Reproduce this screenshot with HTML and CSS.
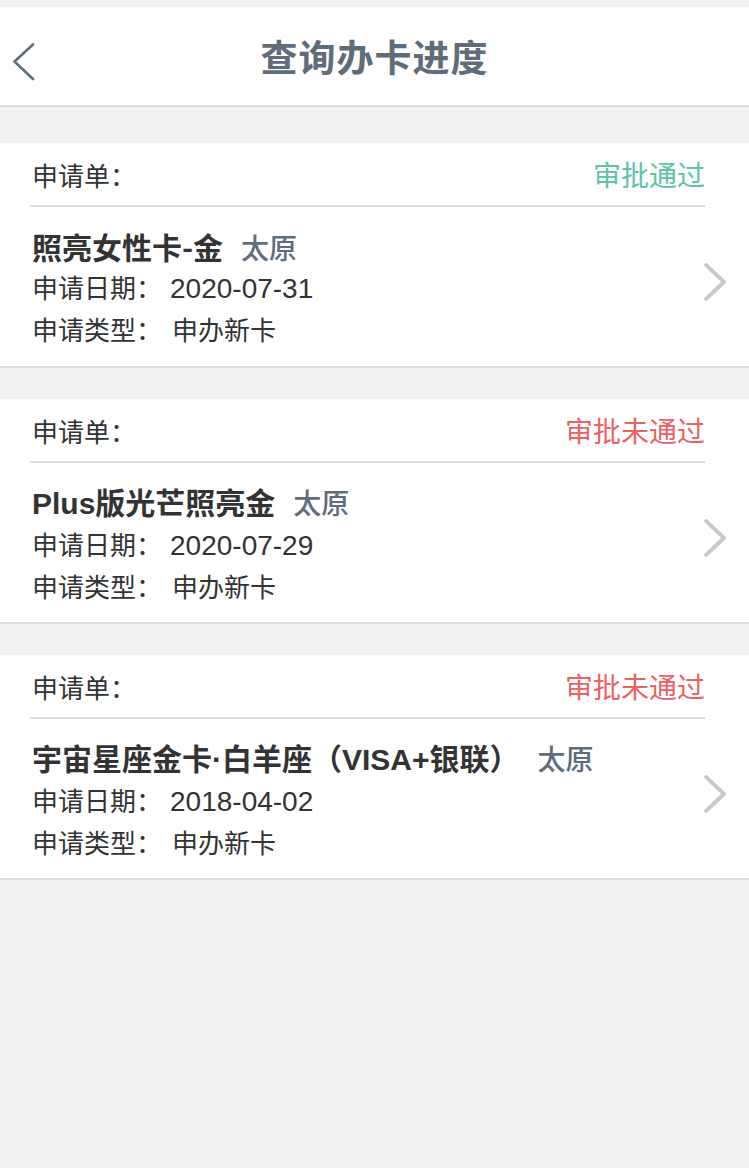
FILE: index.html
```html
<!DOCTYPE html>
<html>
<head>
  <meta charset="utf-8">
  <title>查询办卡进度</title>
  <link rel="stylesheet" href="styles.css">
</head>
<body>
  <div class="topbar">
    <a class="back" href="#">
      <svg width="24" height="40" viewBox="0 0 24 40"><polyline points="21,2.5 2.5,19.5 21,37" fill="none" stroke="#616e7b" stroke-width="2.6" stroke-linecap="round" stroke-linejoin="round"/></svg>
    </a>
    <h1>查询办卡进度</h1>
  </div>

  <div class="list">
    <div class="card">
      <div class="card-head">
        <span class="label">申请单：</span>
        <span class="status pass">审批通过</span>
      </div>
      <div class="card-body">
        <div class="info">
          <div class="title">照亮女性卡-金<span class="city">太原</span></div>
          <div class="line">申请日期：<span class="val num">2020-07-31</span></div>
          <div class="line">申请类型：<span class="val">申办新卡</span></div>
        </div>
        <svg class="arrow" width="26" height="40" viewBox="0 0 26 40"><polyline points="4,3 22,20 4,37" fill="none" stroke="#c8c8cd" stroke-width="3.8" stroke-linecap="round" stroke-linejoin="round"/></svg>
      </div>
    </div>

    <div class="card">
      <div class="card-head">
        <span class="label">申请单：</span>
        <span class="status fail">审批未通过</span>
      </div>
      <div class="card-body">
        <div class="info">
          <div class="title"><span class="num">Plus</span>版光芒照亮金<span class="city">太原</span></div>
          <div class="line">申请日期：<span class="val num">2020-07-29</span></div>
          <div class="line">申请类型：<span class="val">申办新卡</span></div>
        </div>
        <svg class="arrow" width="26" height="40" viewBox="0 0 26 40"><polyline points="4,3 22,20 4,37" fill="none" stroke="#c8c8cd" stroke-width="3.8" stroke-linecap="round" stroke-linejoin="round"/></svg>
      </div>
    </div>

    <div class="card">
      <div class="card-head">
        <span class="label">申请单：</span>
        <span class="status fail">审批未通过</span>
      </div>
      <div class="card-body">
        <div class="info">
          <div class="title">宇宙星座金卡<span class="num">·</span>白羊座（<span class="num">VISA+</span>银联）<span class="city">太原</span></div>
          <div class="line">申请日期：<span class="val num">2018-04-02</span></div>
          <div class="line">申请类型：<span class="val">申办新卡</span></div>
        </div>
        <svg class="arrow" width="26" height="40" viewBox="0 0 26 40"><polyline points="4,3 22,20 4,37" fill="none" stroke="#c8c8cd" stroke-width="3.8" stroke-linecap="round" stroke-linejoin="round"/></svg>
      </div>
    </div>
  </div>
</body>
</html>
```

FILE: styles.css
```css
body {
  margin: 0;
  padding-top: 7px;
  background-color: #f2f2f2;
  font-family: "Noto Sans CJK SC", "Liberation Sans", sans-serif;
  color: #333;
  width: 749px;
  min-height: 1161px;
}
.topbar {
  position: relative;
  height: 98px;
  background-color: #fff;
  border-bottom: 2px solid #d6dce2;
  display: flex;
  align-items: center;
  justify-content: center;
}
.topbar h1 {
  margin: 0;
  font-size: 37px;
  font-weight: bold;
  color: #5f6c79;
  letter-spacing: 1px;
}
.back {
  position: absolute;
  left: 12px;
  top: 35px;
  display: block;
  height: 40px;
}
.list {
  padding-top: 36px;
}
.card {
  background-color: #fff;
  border-bottom: 2px solid #dcdcdc;
  margin-bottom: 31px;
}
.card-head {
  height: 62px;
  margin: 0 44px 0 30px;
  padding-left: 2px;
  border-bottom: 2px solid #dcdcdc;
  display: flex;
  align-items: center;
  justify-content: space-between;
  font-size: 26px;
}
.status {
  font-size: 28px;
}
.status.pass {
  color: #5cc4a0;
}
.status.fail {
  color: #ec6161;
}
.card-body {
  height: 159px;
  padding: 0 21px 0 32px;
  display: flex;
  align-items: center;
  justify-content: space-between;
}
.info {
  padding-top: 1px;
}
.title {
  font-size: 30px;
  font-weight: bold;
  line-height: 40px;
  color: #333;
}
.city {
  margin-left: 18px;
  font-size: 28px;
  font-weight: 500;
  color: #5d6d7e;
}
.line {
  font-size: 26px;
  line-height: 40px;
}
.val {
  margin-left: 10px;
}
.num {
  font-family: "Liberation Sans", "Noto Sans CJK SC", sans-serif;
}
.line .num {
  font-size: 28px;
  margin-left: 8px;
}
.arrow {
  margin-bottom: 10px;
}
```
